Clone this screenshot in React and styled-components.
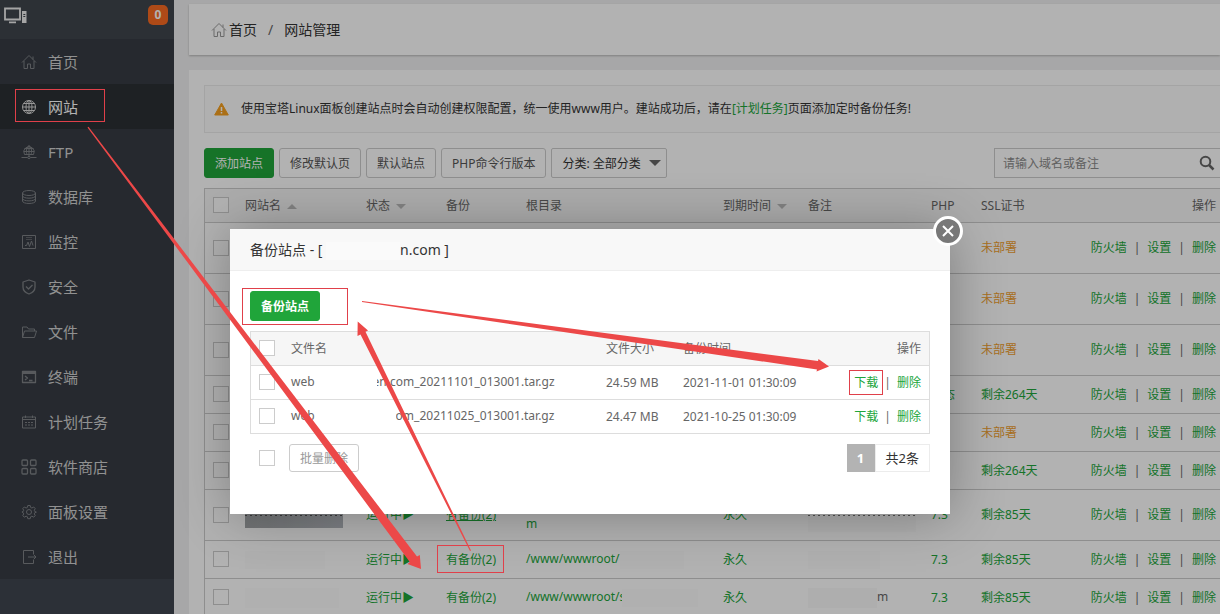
import styled, { createGlobalStyle, css } from "styled-components";

const GlobalStyle = createGlobalStyle`
    * {
        box-sizing: border-box;
    }
    body {
        margin: 0;
        background: #f0f0f1;
        color: #666666;
        font-family: "Noto Sans", "Noto Sans CJK SC", sans-serif;
        font-size: 12px;
        line-height: 18px;
    }
    button,
    input,
    select {
        font-family: inherit;
        font-size: 12px;
    }
    a {
        text-decoration: none;
    }
`;

const Page = styled.div`
    position: relative;
    display: flex;
    height: 100vh;
    overflow: hidden;
`;

/* sidebar */

const Sidebar = styled.aside`
    flex: none;
    width: 174px;
    background: #40454f;
`;

const SidebarTop = styled.div`
    display: flex;
    justify-content: space-between;
    height: 39px;
    padding: 5px 6px 0 4px;
    background: #3f454d;
`;

const Badge = styled.span`
    width: 20px;
    height: 20px;
    border-radius: 5px;
    background: #f96a22;
    color: #ffffff;
    font-weight: 700;
    line-height: 20px;
    text-align: center;
`;

const NavLink = styled.a`
    display: flex;
    align-items: center;
    gap: 11px;
    height: 45px;
    padding-left: 21px;
    background: #373c44;
    color: #d0d0d0;
    font-size: 15px;

    svg {
        color: #7e8186;
    }

    ${(props) =>
        props.$active &&
        css`
            background: #2c3034;
            color: #ffffff;

            svg {
                color: #d8d8d8;
            }
        `}
`;

const Icon = styled.svg`
    flex: none;
    width: 16px;
    height: 16px;
    fill: none;
    stroke: currentColor;
    stroke-width: 1;
    stroke-linejoin: round;
`;

/* main area */

const Main = styled.main`
    flex: 1;
    min-width: 0;
    padding: 4px 0 0 15px;
`;

const Breadcrumb = styled.nav`
    display: flex;
    align-items: center;
    height: 51px;
    padding-left: 22px;
    background: #ffffff;
    box-shadow: 0 1px 2px rgba(0, 0, 0, 0.25);
    font-size: 14px;

    a {
        display: flex;
        align-items: center;
        gap: 2px;
        color: #333333;
    }
    svg {
        color: #999999;
    }
    .slash {
        margin: 0 11px;
    }
`;

const Panel = styled.section`
    margin-top: 15px;
    padding: 15px 0 0 15px;
    background: #ffffff;
`;

const Notice = styled.p`
    display: flex;
    align-items: center;
    gap: 12px;
    height: 48px;
    margin: 0 0 15px;
    padding-left: 9px;
    border: 1px solid #ebebeb;
    border-right: 0;
    background: #fcfcfc;
    color: #333333;
`;

const Toolbar = styled.div`
    display: flex;
    gap: 5px;
    margin-bottom: 10px;
`;

const Button = styled.button`
    height: 30px;
    padding: 0 10px;
    border: 1px solid #cccccc;
    border-radius: 3px;
    background: #ffffff;
    color: #555555;
    white-space: nowrap;

    ${(props) =>
        props.$primary &&
        css`
            border-color: #20a53a;
            background: #20a53a;
            color: #ffffff;
        `}
    ${(props) => props.$bold && "font-weight: 700;"}
    ${(props) =>
        props.$muted &&
        css`
            height: 28px;
            color: #999999;
        `}
`;

const SelectBox = styled.label`
    position: relative;
    width: 116px;

    select {
        width: 100%;
        height: 30px;
        padding: 0 10px;
        appearance: none;
        border: 1px solid #cccccc;
        border-radius: 2px;
        background: transparent;
        color: #333333;
    }
`;

const Caret = styled.span`
    display: inline-block;
    margin-left: 6px;
    border: 5px solid transparent;
    vertical-align: middle;

    ${(props) =>
        props.$up
            ? "border-top: 0; border-bottom-color: #bbbbbb;"
            : "border-bottom: 0; border-top-color: #bbbbbb;"}
`;

const SelectCaret = styled(Caret)`
    position: absolute;
    top: 12px;
    right: 6px;
    border-width: 6px;
    border-bottom: 0;
    border-top-color: #666666;
    pointer-events: none;
`;

const Search = styled.form`
    display: flex;
    align-items: center;
    width: 226px;
    height: 30px;
    margin-left: auto;
    border: 1px solid #cccccc;
    border-right: 0;

    input {
        flex: 1;
        min-width: 0;
        padding: 0 8px;
        border: 0;
        outline: none;
        background: transparent;

        &::placeholder {
            color: #8c8c8c;
        }
    }
    button {
        display: flex;
        padding: 0 5px;
        border: 0;
        background: transparent;
        color: #666666;
    }
`;

const Table = styled.table`
    width: 100%;
    table-layout: fixed;
    border: 1px solid #dddddd;
    border-bottom: 0;
    border-spacing: 0;

    th,
    td {
        padding: 0 0 0 8px;
        border-bottom: 1px solid #dddddd;
        text-align: left;
        font-weight: 400;
        white-space: nowrap;
    }
    th {
        background: #f6f6f6;
    }
    th:first-child,
    td:first-child {
        padding-bottom: 1px;
    }
    th:last-child,
    td:last-child {
        padding-right: 8px;
        text-align: right;
    }
`;

const SiteTable = styled(Table)`
    border-right: 0;
    border-color: #cccccc;

    th,
    td {
        border-color: #cccccc;
    }
    th:last-child,
    td:last-child {
        padding-right: 4px;
    }
`;

const Row = styled.tr`
    height: ${(props) => props.$height || 34}px;
`;

const Checkbox = styled.input.attrs({ type: "checkbox" })`
    display: block;
    width: 16px;
    height: 16px;
    margin: 0;
    appearance: none;
    border: 1px solid #cccccc;
    background: #ffffff;
`;

const Link = styled.a`
    color: ${(props) => (props.$warn ? "#f0a030" : "#20a53a")};
    ${(props) => props.$underline && "text-decoration: underline;"}
`;

const Divider = styled.span`
    margin: 0 ${(props) => (props.$wide ? 7 : 6)}px;
`;

/* painted over private text, may cover part of the letter next to it */
const Smudge = styled.span`
    position: relative;
    display: inline-block;
    width: ${(props) => props.$width}px;
    height: ${(props) => props.$height || 18}px;
    margin-left: ${(props) => (props.$over === "left" ? -3 : 0)}px;
    margin-right: ${(props) => (props.$over === "right" ? -4 : 0)}px;
    background: ${(props) => props.$color || "#fcfcfc"};
    vertical-align: middle;
`;

/* dialog */

const Shade = styled.div`
    position: absolute;
    inset: 0;
    background: rgba(0, 0, 0, 0.3);
`;

const Dialog = styled.div`
    position: absolute;
    top: 229px;
    left: 230px;
    width: 720px;
    background: #ffffff;
    box-shadow: 1px 1px 50px rgba(0, 0, 0, 0.3);
`;

const DialogTitle = styled.h2`
    height: 42px;
    margin: 0;
    padding: 0 20px;
    border-bottom: 1px solid #eeeeee;
    background: #f8f8f8;
    color: #333333;
    font-size: 14px;
    font-weight: 400;
    line-height: 42px;
`;

const CloseButton = styled.button`
    position: absolute;
    top: -13px;
    right: -13px;
    display: flex;
    align-items: center;
    justify-content: center;
    width: 30px;
    height: 30px;
    padding: 0;
    border: 3px solid #ffffff;
    border-radius: 50%;
    background: #787878;
    color: #ffffff;
`;

const DialogBody = styled.div`
    padding: 20px 20px 42px;

    table {
        margin: 10px 0;
    }
`;

const DialogFooter = styled.div`
    display: flex;
    align-items: center;
    gap: 14px;
    padding-left: 9px;
`;

const Pager = styled.div`
    display: flex;
    margin-left: auto;
    font-size: 13px;
    line-height: 26px;

    span {
        padding: 0 10px;
        border: 1px solid #ececec;
        color: #333333;
    }
    .current {
        width: 28px;
        padding: 0;
        border-color: #b3b3b3;
        background: #b3b3b3;
        color: #ffffff;
        font-weight: 700;
        text-align: center;
    }
`;

const Marks = styled.svg`
    position: absolute;
    top: 0;
    left: 0;
    pointer-events: none;
`;

const icons = {
    home: <path d="M1 8.5 8 1.5l7 7M3 7v7.5h3.5V10h3v4.5H13V7M12 2.5v3" />,
    globe: (
        <>
            <circle cx="8" cy="8" r="6.5" />
            <ellipse cx="8" cy="8" rx="3" ry="6.5" />
            <path d="M8 1.5v13M1.5 8h13M2.5 4.5h11M2.5 11.5h11" />
        </>
    ),
    ftp: (
        <>
            <path d="M3.5 10.5a5.2 5.2 0 1 1 9 0zM8 1.5v9M3 7.5h10M3.5 4.5h9M6 10.5c-1-3-1-6 2-9 3 3 3 6 2 9M8 10.5v2M.5 13.5h6M9.5 13.5h6" />
            <circle cx="8" cy="13.5" r="1.2" />
        </>
    ),
    database: (
        <>
            <ellipse cx="8" cy="4" rx="6.5" ry="2.5" />
            <path d="M1.5 4v8c0 3.3 13 3.3 13 0V4M1.5 6.7c0 3.3 13 3.3 13 0M1.5 9.4c0 3.3 13 3.3 13 0" />
        </>
    ),
    monitor: (
        <>
            <path d="M1.5 1.5h13v13h-13zM4 11.5h1.5L7 8l1.5 4.5 2-5.5 1.5 4.5" />
            <path d="M5 3.5h6M5 5.5h6" opacity="0.6" />
        </>
    ),
    shield: <path d="M8 1 14 3v5c0 4-3 6-6 7-3-1-6-3-6-7V3zM5 7.5 7.5 10l4-4" strokeWidth="1.3" />,
    folder: <path d="M1.5 13.5V3H6l1.5 2h6v2M1.5 13.5l2-6.5h12l-2 6.5z" />,
    terminal: (
        <>
            <path d="M1 2h14v3H1z" fill="currentColor" stroke="none" />
            <path d="M1.5 2.5h13v11h-13zM4 7l2.5 2L4 11M8 11.5h3.5" strokeWidth="1.3" />
        </>
    ),
    calendar: (
        <path d="M1.5 3h13v11h-13zM4.5 1.5V4M11.5 1.5V4M1.5 5.5h13M4 8.5h2M7 8.5h2M10 8.5h2M4 11h2M7 11h2M10 11h2" />
    ),
    grid: (
        <>
            <rect x="1" y="1" width="5.5" height="5.5" rx="1" strokeWidth="1.3" />
            <rect x="9.5" y="1" width="5.5" height="5.5" rx="1" strokeWidth="1.3" />
            <rect x="1" y="9.5" width="5.5" height="5.5" rx="1" strokeWidth="1.3" />
            <rect x="9.5" y="9.5" width="5.5" height="5.5" rx="1" strokeWidth="1.3" />
        </>
    ),
    gear: (
        <>
            <path d="M6.8 1.5h2.4l.4 1.9 1.3.6 1.8-1 1.500 1.600-.9 1.700.5 1.200 1.500.5v.0.2l-1.500.5-.5 1.200.9 1.700-1.500 1.600-1.800-1-1.300.6-.4 1.900H6.800l-.4-1.900-1.300-.6-1.800 1-1.500-1.600.9-1.700-.5-1.200L.9 8l1.300-.5.5-1.200-.9-1.700L3.300 3l1.800 1 1.300-.6z" />
            <circle cx="8" cy="8" r="2.5" />
        </>
    ),
    exit: <path d="M12.5 5V1.5h-10v13h10V11M7 8h8M12.5 5.5 15 8l-2.5 2.5" />,
};

const menu = [
    { icon: "home", text: "首页" },
    { icon: "globe", text: "网站", active: true },
    { icon: "ftp", text: "FTP" },
    { icon: "database", text: "数据库" },
    { icon: "monitor", text: "监控" },
    { icon: "shield", text: "安全" },
    { icon: "folder", text: "文件" },
    { icon: "terminal", text: "终端" },
    { icon: "calendar", text: "计划任务" },
    { icon: "grid", text: "软件商店" },
    { icon: "gear", text: "面板设置" },
    { icon: "exit", text: "退出" },
];

const teeth =
    "repeating-linear-gradient(90deg, #555 0 2px, transparent 2px 5px) 0 13px / 100% 1px no-repeat, linear-gradient(90deg, #a3a6a8, #b4b8be)";
const paleTeeth =
    "repeating-linear-gradient(90deg, #777 0 2px, transparent 2px 5px) 0 17px / 100% 1px no-repeat, #fbfbfb";

const sites = [
    { tall: true, ssl: "未部署", warn: true },
    { tall: true, ssl: "未部署", warn: true },
    { tall: true, ssl: "未部署", warn: true },
    { php: "静态", ssl: "剩余264天" },
    { ssl: "未部署", warn: true },
    { ssl: "剩余264天" },
    {
        tall: true,
        running: true,
        underline: true,
        name: <Smudge $width={98} $height={26} $color={teeth} />,
        root: (
            <>
                <br />m
            </>
        ),
        remark: <Smudge $width={108} $height={34} $color={paleTeeth} />,
        php: "7.3",
        ssl: "剩余85天",
    },
    {
        running: true,
        name: <Smudge $width={80} />,
        root: (
            <>
                /www/wwwroot/
                <Smudge $width={64} />
            </>
        ),
        remark: <Smudge $width={72} />,
        php: "7.3",
        ssl: "剩余85天",
    },
    {
        running: true,
        name: <Smudge $width={94} $height={20} />,
        root: (
            <>
                /www/wwwroot/s
                <Smudge $width={76} $over="left" />
            </>
        ),
        remark: (
            <>
                <Smudge $width={69} $height={20} $color="#f9f9f9" />m
            </>
        ),
        php: "7.3",
        ssl: "剩余85天",
    },
];

const backups = [
    {
        gap: 62,
        over: "right",
        file: "en.com_20211101_013001.tar.gz",
        size: "24.59 MB",
        time: "2021-11-01 01:30:09",
    },
    { gap: 81, file: "om_20211025_013001.tar.gz", size: "24.47 MB", time: "2021-10-25 01:30:09" },
];

function SiteRow({ site }) {
    return (
        <Row $height={site.tall ? 51 : 38}>
            <td>
                <Checkbox aria-label="site" />
            </td>
            <td>{site.name}</td>
            <td>{site.running && <Link href="#">运行中▶</Link>}</td>
            <td>
                {site.running && (
                    <Link href="#" $underline={site.underline}>
                        有备份(2)
                    </Link>
                )}
            </td>
            <td>
                <Link href="#">{site.root}</Link>
            </td>
            <td>{site.running && <Link href="#">永久</Link>}</td>
            <td>{site.remark}</td>
            <td>
                <Link href="#">{site.php}</Link>
            </td>
            <td>
                <Link href="#" $warn={site.warn}>
                    {site.ssl}
                </Link>
            </td>
            <td>
                <Link href="#">防火墙</Link>
                <Divider $wide>|</Divider>
                <Link href="#">设置</Link>
                <Divider $wide>|</Divider>
                <Link href="#">删除</Link>
            </td>
        </Row>
    );
}

function SiteList() {
    return (
        <SiteTable>
            <colgroup>
                <col width="32" />
                <col width="121" />
                <col width="80" />
                <col width="80" />
                <col width="197" />
                <col width="85" />
                <col width="123" />
                <col width="50" />
                <col width="100" />
                <col />
            </colgroup>
            <thead>
                <Row>
                    <th>
                        <Checkbox aria-label="all sites" />
                    </th>
                    <th>
                        网站名
                        <Caret $up />
                    </th>
                    <th>
                        状态
                        <Caret />
                    </th>
                    <th>备份</th>
                    <th>根目录</th>
                    <th>
                        到期时间
                        <Caret />
                    </th>
                    <th>备注</th>
                    <th>PHP</th>
                    <th>SSL证书</th>
                    <th>操作</th>
                </Row>
            </thead>
            <tbody>
                {sites.map((site, i) => (
                    <SiteRow key={i} site={site} />
                ))}
            </tbody>
        </SiteTable>
    );
}

function BackupDialog() {
    return (
        <Dialog role="dialog">
            <DialogTitle>
                备份站点 - [ <Smudge $width={74} $color="#fafafa" />
                n.com ]
            </DialogTitle>
            <CloseButton aria-label="close">
                <Icon viewBox="0 0 16 16">
                    <path d="M3 3l10 10M13 3 3 13" strokeWidth="2" />
                </Icon>
            </CloseButton>
            <DialogBody>
                <Button $primary $bold>
                    备份站点
                </Button>
                <Table>
                    <colgroup>
                        <col width="32" />
                        <col width="315" />
                        <col width="77" />
                        <col />
                        <col width="100" />
                    </colgroup>
                    <thead>
                        <Row>
                            <th>
                                <Checkbox aria-label="all files" />
                            </th>
                            <th>文件名</th>
                            <th>文件大小</th>
                            <th>备份时间</th>
                            <th>操作</th>
                        </Row>
                    </thead>
                    <tbody>
                        {backups.map((backup) => (
                            <Row key={backup.time}>
                                <td>
                                    <Checkbox aria-label={backup.time} />
                                </td>
                                <td>
                                    web
                                    <Smudge $width={backup.gap} $over={backup.over} $color="#ffffff" />
                                    {backup.file}
                                </td>
                                <td>{backup.size}</td>
                                <td>{backup.time}</td>
                                <td>
                                    <Link href="#">下载</Link>
                                    <Divider>|</Divider>
                                    <Link href="#">删除</Link>
                                </td>
                            </Row>
                        ))}
                    </tbody>
                </Table>
                <DialogFooter>
                    <Checkbox aria-label="select files" />
                    <Button $muted>批量删除</Button>
                    <Pager>
                        <span className="current">1</span>
                        <span>共2条</span>
                    </Pager>
                </DialogFooter>
            </DialogBody>
        </Dialog>
    );
}

function Annotations() {
    return (
        <Marks width="1220" height="614" viewBox="0 0 1220 614">
            <g fill="none" stroke="#e0404a">
                <rect x="15.5" y="89.5" width="89" height="32" />
                <rect x="242.5" y="288.5" width="105" height="36" />
                <rect x="849.5" y="370.5" width="33" height="24" />
                <rect x="437.5" y="545.5" width="66" height="27" />
            </g>
            <g fill="#ec4848">
                <path d="M87.500 127.500 88.500 126.800 417 556.500 419.800 555 421 569 407.500 564 409.800 562z" />
                <path d="M471 550.500 470 551 360.500 334.500 357.500 336 357.700 321.500 368 330.500 365.500 331.800z" />
                <path d="M362 301 362 302 817 369.500 816.500 371.500 829 366.500 818.500 359 818 361z" />
            </g>
        </Marks>
    );
}

function App() {
    return (
        <Page>
            <GlobalStyle />
            <Sidebar>
                <SidebarTop>
                    <svg width="23" height="20" viewBox="0 0 23 20" fill="none" stroke="#ededed" strokeWidth="1.8">
                        <path d="M1 3.5h15v11H1zM5 17.300h7" />
                        <path d="M18 6h4.500v12H18z" fill="#ededed" stroke="none" />
                        <path d="M19.300 9.500h2M19.300 11.500h2" stroke="#3f454d" strokeWidth="1" />
                    </svg>
                    <Badge>0</Badge>
                </SidebarTop>
                {menu.map((item) => (
                    <NavLink key={item.icon} href="#" $active={item.active}>
                        <Icon viewBox="0 0 16 16">{icons[item.icon]}</Icon>
                        {item.text}
                    </NavLink>
                ))}
            </Sidebar>
            <Main>
                <Breadcrumb>
                    <a href="#">
                        <Icon viewBox="0 0 16 16">{icons.home}</Icon>
                        首页
                    </a>
                    <span className="slash">/</span>
                    <a href="#">网站管理</a>
                </Breadcrumb>
                <Panel>
                    <Notice>
                        <svg width="15" height="14" viewBox="0 0 15 14">
                            <path d="M7.500 1 14.300 13H.7z" fill="#f5a020" stroke="#f5a020" strokeLinejoin="round" />
                            <path d="M7.500 5v4M7.500 10v1.500" stroke="#ffffff" strokeWidth="1.500" />
                        </svg>
                        <span>
                            使用宝塔Linux面板创建站点时会自动创建权限配置，统一使用www用户。建站成功后，请在
                            <Link href="#">[计划任务]</Link>
                            页面添加定时备份任务!
                        </span>
                    </Notice>
                    <Toolbar>
                        <Button $primary>添加站点</Button>
                        <Button>修改默认页</Button>
                        <Button>默认站点</Button>
                        <Button>PHP命令行版本</Button>
                        <SelectBox>
                            <select aria-label="分类">
                                <option>分类: 全部分类</option>
                            </select>
                            <SelectCaret />
                        </SelectBox>
                        <Search>
                            <input type="text" placeholder="请输入域名或备注" aria-label="请输入域名或备注" />
                            <button type="button" aria-label="search">
                                <Icon viewBox="0 0 16 16">
                                    <circle cx="6.5" cy="6.5" r="4.8" strokeWidth="2" />
                                    <path d="M10 10l4.5 4.5" strokeWidth="2.5" />
                                </Icon>
                            </button>
                        </Search>
                    </Toolbar>
                    <SiteList />
                </Panel>
            </Main>
            <Shade />
            <BackupDialog />
            <Annotations />
        </Page>
    );
}

export default App;
